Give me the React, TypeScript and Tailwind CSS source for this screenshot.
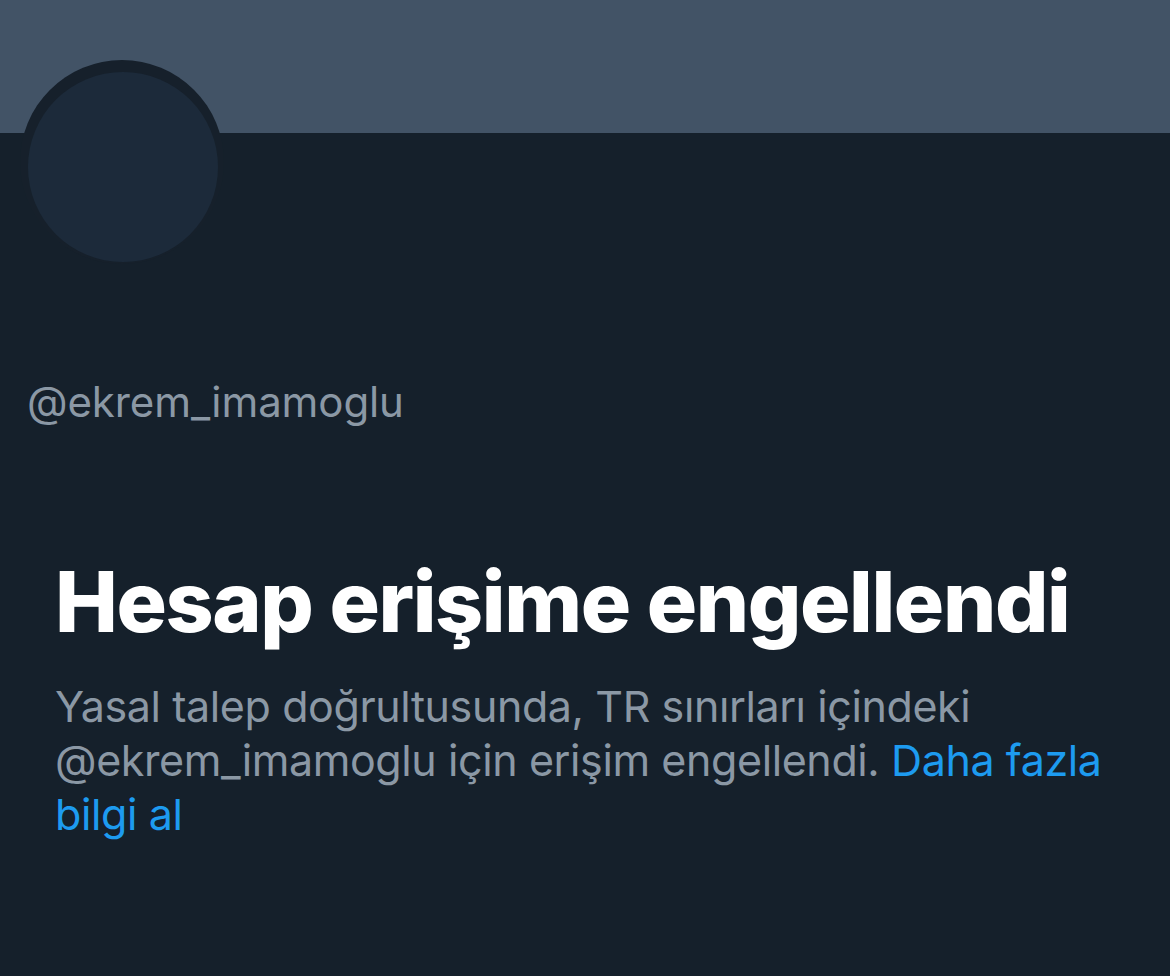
import React from 'react';

const App: React.FC = () => {
  return (
    <div
      className="w-[1170px] h-[976px] overflow-hidden bg-[#15202b]"
      style={{ fontFamily: 'Inter, "Noto Sans", sans-serif' }}
    >
      <div className="h-[133px] bg-[#425366]" />

      <div className="px-[20px]">
        {/* avatar: dark ring with the empty picture inside */}
        <div className="-mt-[73px] w-[204px] h-[204px] rounded-full bg-[#16202b] pt-[12px] pl-[8px]">
          <div className="w-[190px] h-[190px] rounded-full bg-[#1c2a3a]" />
        </div>
      </div>

      <div className="px-[27px] mt-[112px]">
        <p className="text-[42px] leading-[52px] text-[#8b98a5] tracking-[-0.1px]">@ekrem_imamoglu</p>
      </div>

      <div className="px-[55px] mt-[126px]">
        <h1 className="text-[84px] leading-[96px] font-extrabold text-white tracking-[-1.4px]">
          Hesap erişime engellendi
        </h1>
        <p className="mt-[29px] text-[43px] leading-[54px] text-[#8b98a5] tracking-[-0.4px]">
          Yasal talep doğrultusunda, TR sınırları içindeki @ekrem_imamoglu için erişim engellendi.{' '}
          <a className="text-[#1d9bf0]">Daha fazla bilgi al</a>
        </p>
      </div>
    </div>
  );
};

export default App;
